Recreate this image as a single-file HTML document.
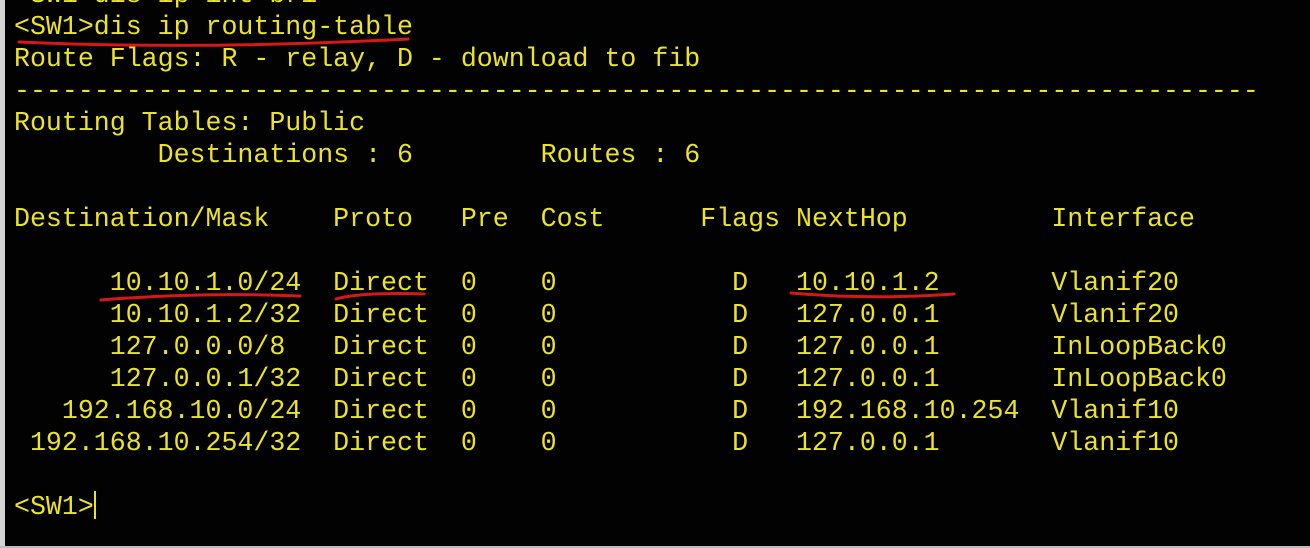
<!DOCTYPE html>
<html><head><meta charset="utf-8"><style>
html,body{margin:0;padding:0;width:1310px;height:548px;overflow:hidden;background:#020202;}
.strip{position:absolute;left:0;top:0;width:5px;height:548px;background:#d4d4d4;}
.bot{position:absolute;left:0;top:546px;width:1310px;height:2px;background:#bdbdbd;}
pre{position:absolute;left:14px;top:-21px;margin:0;font-family:"Liberation Mono",monospace;font-size:26.6px;line-height:32px;color:#ebe22a;letter-spacing:0;}
.cur{display:inline-block;width:2px;height:28px;background:#ebe22a;vertical-align:-5px;}
svg{position:absolute;left:0;top:0;}
</style></head><body>
<div class="strip"></div>
<pre>&lt;SW1&gt;dis ip int bri
&lt;SW1&gt;dis ip routing-table
Route Flags: R - relay, D - download to fib
------------------------------------------------------------------------------
Routing Tables: Public
         Destinations : 6        Routes : 6

Destination/Mask    Proto   Pre  Cost      Flags NextHop         Interface

      10.10.1.0/24  Direct  0    0           D   10.10.1.2       Vlanif20
      10.10.1.2/32  Direct  0    0           D   127.0.0.1       Vlanif20
      127.0.0.0/8   Direct  0    0           D   127.0.0.1       InLoopBack0
      127.0.0.1/32  Direct  0    0           D   127.0.0.1       InLoopBack0
   192.168.10.0/24  Direct  0    0           D   192.168.10.254  Vlanif10
 192.168.10.254/32  Direct  0    0           D   127.0.0.1       Vlanif10

&lt;SW1&gt;<span class="cur"></span></pre>
<svg width="1310" height="548">
<g fill="none" stroke="#d81818" stroke-width="3" stroke-linecap="round">
<path d="M19 42 Q200 50 408 39"/>
<path d="M101 300 Q200 292 300 296"/>
<path d="M336 299 Q360 292 424 294"/>
<path d="M791 293 Q870 300 954 294"/>
</g></svg>
<div class="bot"></div>
</body></html>
